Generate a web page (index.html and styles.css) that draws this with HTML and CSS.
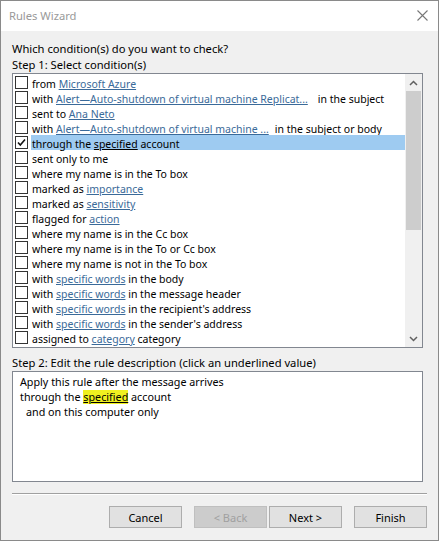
FILE: index.html
```html
<!DOCTYPE html>
<html>
<head>
<meta charset="utf-8">
<link rel="stylesheet" href="styles.css">
</head>
<body>
<div class="window">
  <div class="titlebar">
    <span class="title">Rules Wizard</span>
    <svg class="close" width="11" height="11" viewBox="0 0 11 11"><path d="M0.5 0.5 L10.5 10.5 M10.5 0.5 L0.5 10.5" stroke="#777" stroke-width="1.1" fill="none"/></svg>
  </div>
  <div class="content">
    <div class="label first">Which condition(s) do you want to check?</div>
    <div class="label">Step 1: Select condition(s)</div>
    <div class="list">
      <div class="rows">
        <div class="row"><span class="cb"></span><span class="txt">from <a>Microsoft Azure</a></span></div>
        <div class="row"><span class="cb"></span><span class="txt">with <a>Alert—Auto-shutdown of virtual machine Replicat...</a><span class="gap">in the subject</span></span></div>
        <div class="row"><span class="cb"></span><span class="txt">sent to <a>Ana Neto</a></span></div>
        <div class="row"><span class="cb"></span><span class="txt">with <a>Alert—Auto-shutdown of virtual machine ...</a><span class="gap2">in the subject or body</span></span></div>
        <div class="row sel"><span class="cb"><svg width="11" height="11" viewBox="0 0 11 11"><path d="M2 5.5 L4.3 8 L9 2.5" stroke="#111" stroke-width="1.6" fill="none"/></svg></span><span class="txt">through the <a class="dark">specified</a> account</span></div>
        <div class="row"><span class="cb"></span><span class="txt">sent only to me</span></div>
        <div class="row"><span class="cb"></span><span class="txt">where my name is in the To box</span></div>
        <div class="row"><span class="cb"></span><span class="txt">marked as <a>importance</a></span></div>
        <div class="row"><span class="cb"></span><span class="txt">marked as <a>sensitivity</a></span></div>
        <div class="row"><span class="cb"></span><span class="txt">flagged for <a>action</a></span></div>
        <div class="row"><span class="cb"></span><span class="txt">where my name is in the Cc box</span></div>
        <div class="row"><span class="cb"></span><span class="txt">where my name is in the To or Cc box</span></div>
        <div class="row"><span class="cb"></span><span class="txt">where my name is not in the To box</span></div>
        <div class="row"><span class="cb"></span><span class="txt">with <a>specific words</a> in the body</span></div>
        <div class="row"><span class="cb"></span><span class="txt">with <a>specific words</a> in the message header</span></div>
        <div class="row"><span class="cb"></span><span class="txt">with <a>specific words</a> in the recipient's address</span></div>
        <div class="row"><span class="cb"></span><span class="txt">with <a>specific words</a> in the sender's address</span></div>
        <div class="row"><span class="cb"></span><span class="txt">assigned to <a>category</a> category</span></div>
      </div>
      <div class="scrollbar">
        <div class="arrow"><svg width="9" height="6" viewBox="0 0 9 6"><path d="M1 5 L4.5 1.5 L8 5" stroke="#606060" stroke-width="1.5" fill="none"/></svg></div>
        <div class="track"><div class="thumb"></div></div>
        <div class="arrow"><svg width="9" height="6" viewBox="0 0 9 6"><path d="M1 1 L4.5 4.5 L8 1" stroke="#606060" stroke-width="1.5" fill="none"/></svg></div>
      </div>
    </div>
    <div class="label step2">Step 2: Edit the rule description (click an underlined value)</div>
    <div class="desc">
      <div class="dline">Apply this rule after the message arrives</div>
      <div class="dline">through the <span class="hl">specified</span> account</div>
      <div class="dline indent">and on this computer only</div>
    </div>
    <div class="sep"></div>
    <div class="buttons">
      <button class="btn">Cancel</button>
      <button class="btn disabled">&lt; Back</button>
      <button class="btn next">Next &gt;</button>
      <button class="btn finish">Finish</button>
    </div>
  </div>
</div>
</body>
</html>
```
FILE: styles.css
```css
* { box-sizing: border-box; }
html, body { margin: 0; padding: 0; }
body {
  width: 439px;
  height: 541px;
  font-family: "Noto Sans", "Open Sans", sans-serif;
  font-size: 11px;
  color: #000;
  background: #f0f0f0;
}
.window {
  width: 439px;
  height: 541px;
  border: 1px solid #8a8a8a;
  background: #f0f0f0;
  display: flex;
  flex-direction: column;
}
.titlebar {
  height: 30px;
  background: #fff;
  display: flex;
  align-items: center;
  justify-content: space-between;
  padding: 0 10px 2px 8px;
  flex-shrink: 0;
}
.title { color: #999; font-size: 11.2px; }
.content {
  padding: 10px 11px 0 11px;
  display: flex;
  flex-direction: column;
}
.label { line-height: 16px; height: 16px; white-space: nowrap; font-size: 11.2px; }
.list {
  height: 275px;
  margin-right: 4px;
  border: 1px solid #828790;
  background: #fff;
  display: flex;
}
.rows {
  flex: 1;
  padding-top: 1px;
  overflow: hidden;
  font-size: 10.5px;
}
.row {
  height: 15px;
  display: flex;
  align-items: center;
  white-space: nowrap;
}
.cb {
  width: 13px;
  height: 13px;
  border: 1px solid #333;
  background: #fff;
  margin-left: 2px;
  margin-right: 3px;
  flex-shrink: 0;
  display: flex;
  align-items: center;
  justify-content: center;
}
.txt { line-height: 15px; height: 15px; padding-top: 2px; padding-left: 1px; flex: 1; }
.sel .txt { background: #9ecbf1; }
a { color: #3a6a99; text-decoration: underline; }
a.dark { color: #000; }
.gap { margin-left: 10px; }
.gap2 { margin-left: 6px; }
.scrollbar {
  width: 17px;
  background: #f0f0f0;
  display: flex;
  flex-direction: column;
  flex-shrink: 0;
}
.arrow {
  height: 17px;
  display: flex;
  align-items: center;
  justify-content: center;
}
.track { flex: 1; }
.thumb { height: 139px; background: #cdcdcd; margin: 0 1px; }
.step2 { margin-top: 7px; }
.desc {
  height: 111px;
  margin-right: 4px;
  border: 1px solid #828790;
  background: #fff;
  padding: 3px 0 0 7px;
}
.dline { line-height: 15px; white-space: nowrap; font-size: 10.75px; }
.indent { padding-left: 6px; }
.hl { background: #f0f020; text-decoration: underline; }
.sep {
  margin-top: 11px;
  height: 2px;
  border-top: 1px solid #a0a0a0;
  border-bottom: 1px solid #fff;
}
.buttons {
  margin-top: 11px;
  display: flex;
  justify-content: flex-end;
}
.btn {
  width: 73px;
  height: 22px;
  font-family: inherit;
  font-size: 11px;
  color: #000;
  background: #e1e1e1;
  border: 1px solid #adadad;
  padding: 0;
  margin-left: 12px;
}
.btn.disabled { color: #a0a0a0; background: #cccccc; border-color: #bfbfbf; }
.btn.next { margin-left: 2px; }
.finish { margin-left: 12px; }
```
